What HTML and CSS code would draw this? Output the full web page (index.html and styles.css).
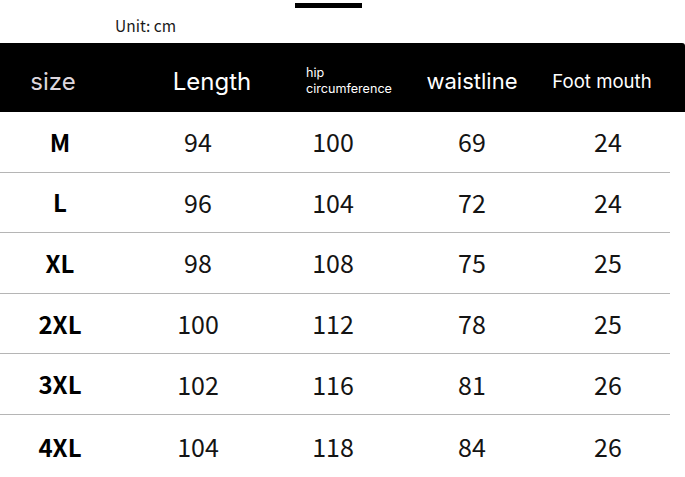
FILE: index.html
```html
<!DOCTYPE html>
<html>
<head>
<meta charset="utf-8">
<link rel="stylesheet" href="styles.css">
</head>
<body>
<div class="page">
  <div class="topbar"></div>
  <div class="unit">Unit: cm</div>
  <div class="head grid">
    <div class="hc hc-size">size</div>
    <div class="hc hc-len">Length</div>
    <div class="hc hc-hip"><span>hip</span><span>circumference</span></div>
    <div class="hc hc-waist">waistline</div>
    <div class="hc hc-foot">Foot mouth</div>
  </div>
  <div class="rows">
    <div class="row grid"><div class="c sz">M</div><div class="c">94</div><div class="c">100</div><div class="c">69</div><div class="c">24</div></div>
    <div class="row grid"><div class="c sz">L</div><div class="c">96</div><div class="c">104</div><div class="c">72</div><div class="c">24</div></div>
    <div class="row grid"><div class="c sz">XL</div><div class="c">98</div><div class="c">108</div><div class="c">75</div><div class="c">25</div></div>
    <div class="row grid"><div class="c sz">2XL</div><div class="c">100</div><div class="c">112</div><div class="c">78</div><div class="c">25</div></div>
    <div class="row grid"><div class="c sz">3XL</div><div class="c">102</div><div class="c">116</div><div class="c">81</div><div class="c">26</div></div>
    <div class="row grid last"><div class="c sz">4XL</div><div class="c">104</div><div class="c">118</div><div class="c">84</div><div class="c">26</div></div>
  </div>
</div>
</body>
</html>
```
FILE: styles.css
```css
html, body {
  margin: 0;
  padding: 0;
  background: #fff;
}
.page {
  width: 685px;
  height: 477px;
  overflow: hidden;
  font-family: "Noto Sans CJK SC", "Noto Sans", sans-serif;
}
.topbar {
  width: 67px;
  height: 5px;
  margin-top: 3px;
  margin-left: 295px;
  background: #000;
}
.unit {
  box-sizing: border-box;
  height: 35px;
  padding-top: 7px;
  padding-left: 115px;
  font-size: 15.5px;
  line-height: 20px;
  color: #1a1a1a;
}
.grid {
  display: grid;
  grid-template-columns: 120px 156px 114px 164px 116px 1fr;
}
.head {
  height: 69px;
  background: #000;
  color: #fff;
  font-family: Inter, "Noto Sans", sans-serif;
  border-top-right-radius: 3px;
}
.hc {
  display: flex;
  align-items: center;
  justify-content: center;
  white-space: nowrap;
  padding-top: 7px;
}
.hc-size {
  font-size: 24px;
  color: #ddd6dd;
  padding-right: 14px;
}
.hc-len {
  font-size: 24px;
  padding-left: 28px;
}
.hc-hip {
  flex-direction: column;
  align-items: flex-start;
  justify-content: center;
  padding-left: 30px;
  padding-top: 6px;
  font-size: 12.6px;
}
.hc-hip span {
  display: block;
  height: 15.4px;
  line-height: 15.4px;
}
.hc-waist {
  font-size: 22px;
}
.hc-foot {
  font-size: 18.6px;
  padding-right: 20px;
}
.row {
  box-sizing: border-box;
  width: 670px;
  height: 60.6px;
  border-bottom: 1px solid #b5b5b5;
}
.row.last {
  border-bottom: none;
  height: 64px;
}
.c {
  display: flex;
  align-items: center;
  justify-content: center;
  font-size: 25px;
  color: #141414;
  padding-bottom: 1px;
}
.c:nth-child(5) {
  padding-right: 8px;
}
.sz {
  font-weight: 700;
  font-size: 24px;
  color: #000;
}
```
